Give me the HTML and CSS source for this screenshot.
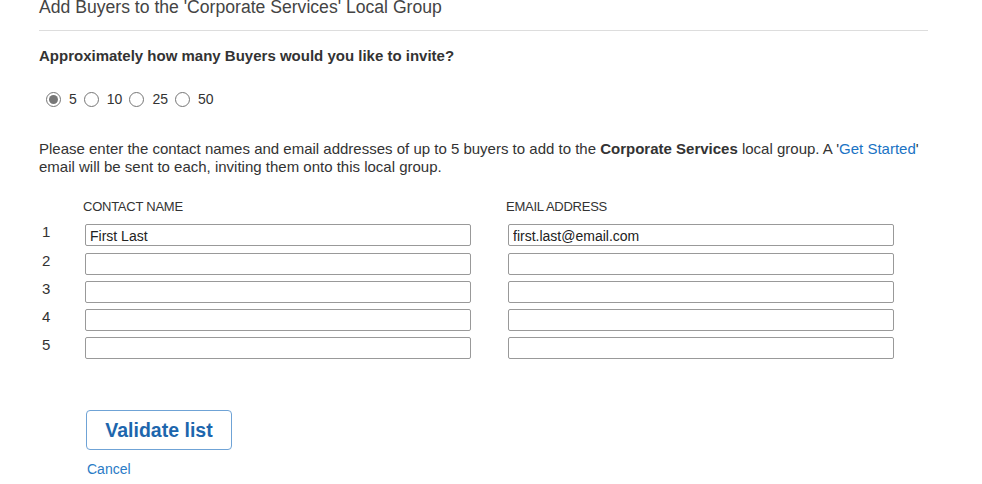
FILE: index.html
```html
<!DOCTYPE html>
<html lang="en">
<head>
    <meta charset="UTF-8">
    <title>Add Buyers</title>
    <link rel="stylesheet" href="styles.css">
</head>
<body>

    <div class="page">
        <h1 class="title">Add Buyers to the 'Corporate Services' Local Group</h1>
        <hr class="divider">

        <h2 class="question">Approximately how many Buyers would you like to invite?</h2>

        <div class="sizes">
            <label class="size"><input type="radio" name="size" checked> 5</label>
            <label class="size"><input type="radio" name="size"> 10</label>
            <label class="size"><input type="radio" name="size"> 25</label>
            <label class="size"><input type="radio" name="size"> 50</label>
        </div>

        <p class="intro">Please enter the contact names and email addresses of up to 5 buyers to add to the <b>Corporate Services</b> local group. A '<a href="#">Get Started</a>' email will be sent to each, inviting them onto this local group.</p>

        <div class="buyers">
            <div></div>
            <div class="col-head">CONTACT NAME</div>
            <div class="col-head">EMAIL ADDRESS</div>

            <div class="num">1</div>
            <input type="text" value="First Last">
            <input type="text" value="first.last@email.com">

            <div class="num">2</div>
            <input type="text">
            <input type="text">

            <div class="num">3</div>
            <input type="text">
            <input type="text">

            <div class="num">4</div>
            <input type="text">
            <input type="text">

            <div class="num">5</div>
            <input type="text">
            <input type="text">
        </div>

        <div class="actions">
            <button class="validate">Validate list</button>
            <a href="#" class="cancel">Cancel</a>
        </div>
    </div>

</body>
</html>
```

FILE: styles.css
```css
body {
    margin: 0;
    font-family: "Liberation Sans", Arial, sans-serif;
    background-color: #fff;
    color: #333;
}

.page {
    width: 889px;
    padding-left: 39px;
}

.title {
    font-size: 17.6px;
    font-weight: normal;
    line-height: 22px;
    color: #444;
    margin: -4px 0 0;
}

.divider {
    border: 0;
    border-top: 1px solid #ddd;
    margin: 12px 0 0;
}

.question {
    font-size: 15px;
    font-weight: bold;
    line-height: 18px;
    margin: 16px 0 0;
    color: #333;
}

.sizes {
    display: flex;
    gap: 7px;
    padding-left: 7px;
    margin-top: 26px;
}

.size {
    display: flex;
    align-items: center;
    font-size: 14px;
    line-height: 16px;
}

.size input {
    appearance: none;
    width: 15px;
    height: 15px;
    margin: 0 8px 0 0;
    border: 1px solid #767676;
    border-radius: 50%;
    background: #fff;
    display: grid;
    place-content: center;
}

.size input:checked::before {
    content: "";
    width: 9px;
    height: 9px;
    border-radius: 50%;
    background: #777;
}

.intro {
    font-size: 15px;
    line-height: 18px;
    margin: 33px 0 0;
}

.intro a {
    color: #1a73c4;
    text-decoration: none;
}

.buyers {
    display: grid;
    grid-template-columns: 46px 423px 386px;
    row-gap: 6.3px;
    margin-top: 23px;
    align-items: center;
}

.col-head {
    font-size: 13px;
    letter-spacing: -0.25px;
    line-height: 16px;
    margin-left: -2px;
    margin-bottom: 3px;
}

.num {
    font-size: 15px;
    line-height: 17px;
    padding-left: 3px;
    margin-top: -7px;
}

.buyers input {
    width: 386px;
    height: 22px;
    box-sizing: border-box;
    border: 1px solid #999;
    border-radius: 2px;
    padding: 1px 4px 0;
    font-family: "Liberation Sans", Arial, sans-serif;
    font-size: 14px;
    color: #222;
}

.actions {
    padding-left: 47px;
    margin-top: 51px;
}

.validate {
    display: block;
    width: 146px;
    height: 40px;
    border: 1px solid #6fa3d6;
    border-radius: 4px;
    background: #fff;
    color: #1d66ad;
    font-family: "Liberation Sans", Arial, sans-serif;
    font-size: 19.5px;
    font-weight: bold;
    cursor: pointer;
}

.cancel {
    display: inline-block;
    margin-top: 11px;
    margin-left: 1px;
    font-size: 14px;
    color: #2a7bc6;
    text-decoration: none;
}
```
